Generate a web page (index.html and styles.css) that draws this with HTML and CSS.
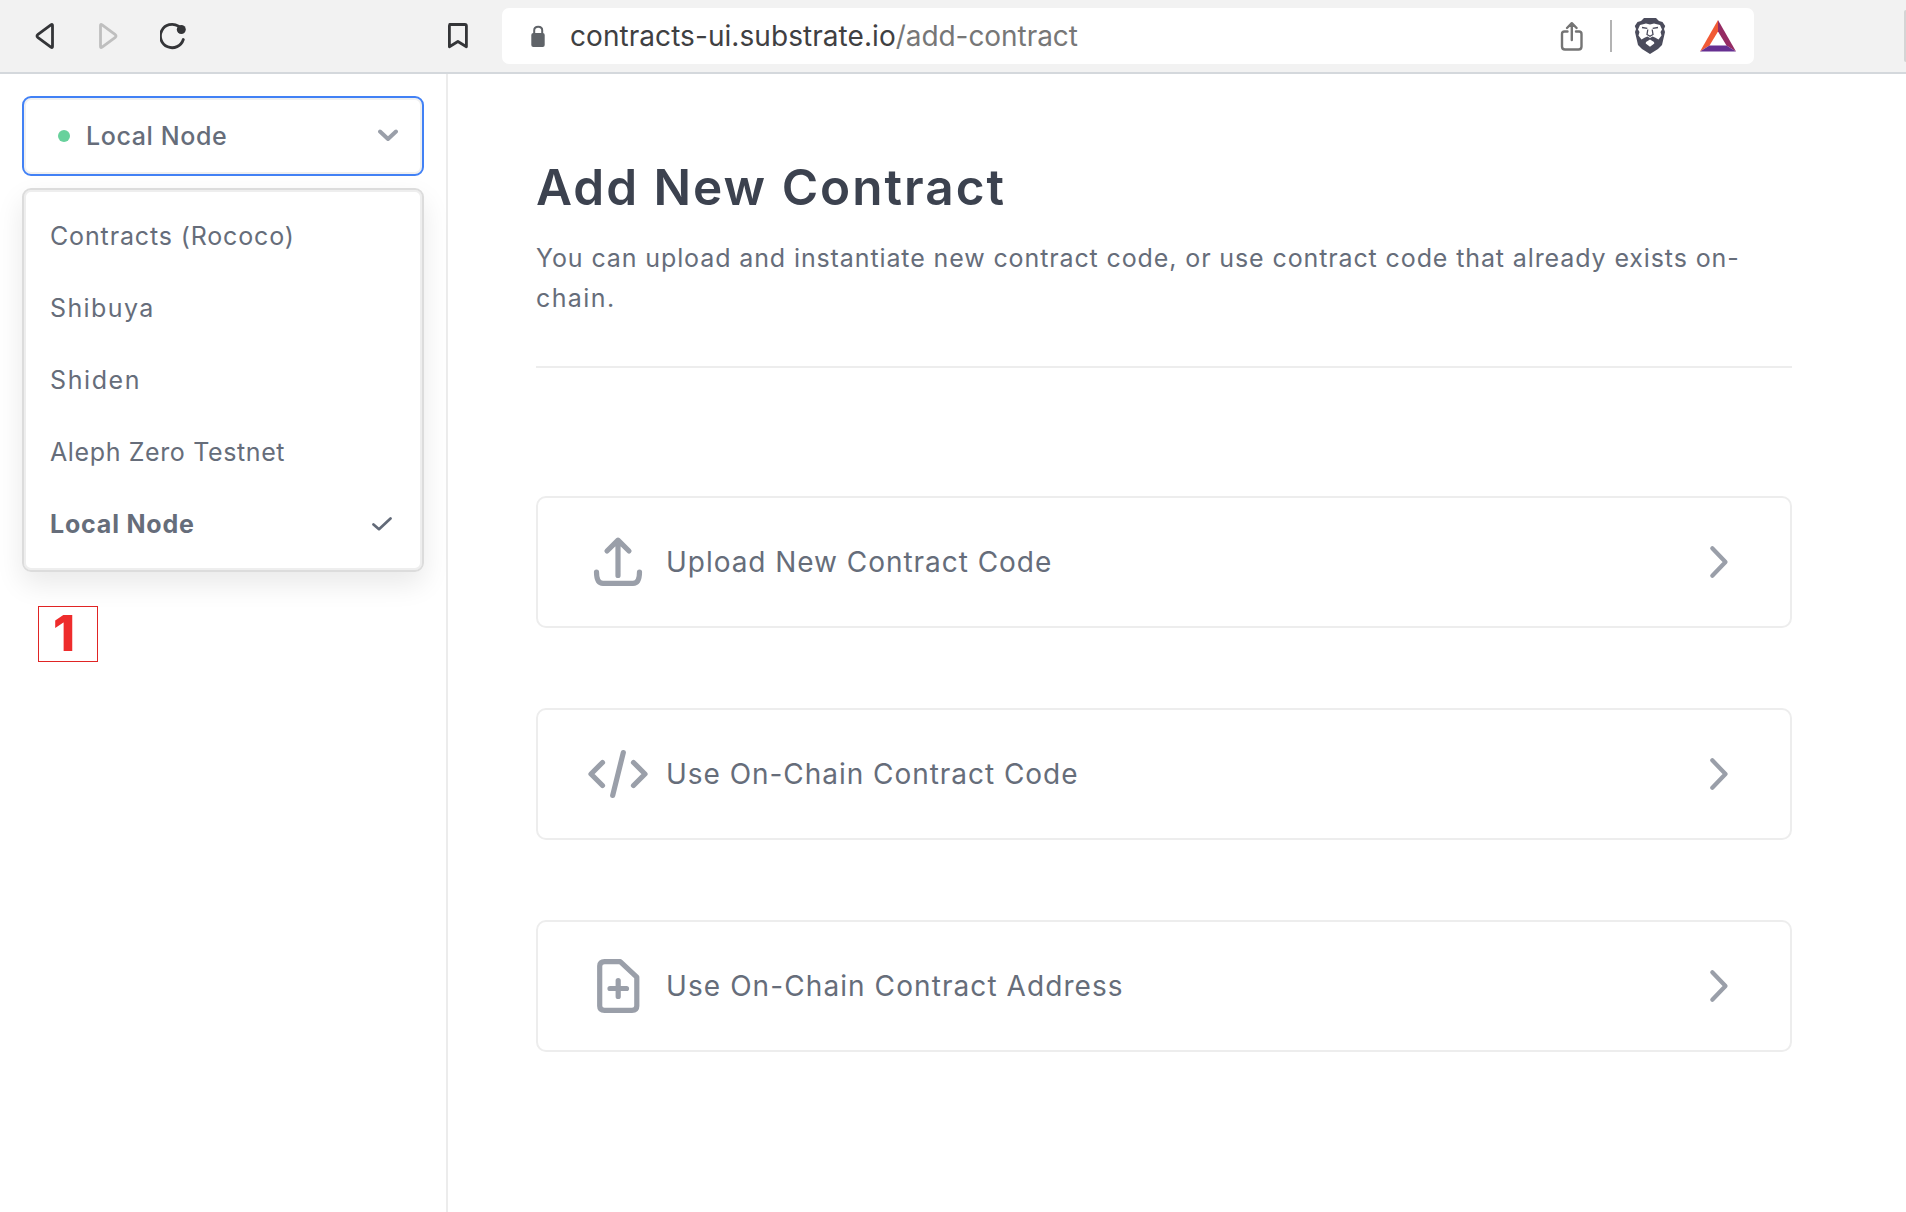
FILE: index.html
```html
<!DOCTYPE html>
<html lang="en">
<head>
<meta charset="utf-8">
<title>Contracts UI</title>
<link rel="stylesheet" href="styles.css">
</head>
<body>
<header class="toolbar">
  <nav class="nav-buttons">
    <svg class="nav-icon" width="34" height="36" viewBox="0 0 34 36"><path d="M18.500 7.500V28.500Q18.500 30.300 16.900 29.200L3.700 19.300Q2.300 18 3.700 16.700L16.900 6.800Q18.500 5.700 18.500 7.500Z"/></svg>
    <svg class="nav-icon nav-icon-off" width="34" height="36" viewBox="0 0 34 36"><path d="M3.500 7.500V28.500Q3.500 30.300 5.100 29.200L18.300 19.300Q19.700 18 18.300 16.700L5.100 6.800Q3.500 5.700 3.500 7.500Z"/></svg>
    <svg class="nav-icon" width="34" height="36" viewBox="0 0 34 36"><path d="M18.500 8.200A11.700 11.700 0 1 0 23.300 21.500"/><circle class="nav-dot" cx="21.300" cy="11.500" r="4.500"/></svg>
  </nav>
  <svg class="nav-icon bookmark" width="24" height="36" viewBox="0 0 24 36"><path d="M4.800 6.500H19.900Q21.400 6.500 21.400 8V28.800L12.900 23.500L4.400 28.800V8Q4.400 6.500 5.900 6.500Z"/></svg>
  <div class="address">
    <svg width="16" height="24" viewBox="0 0 16 24"><path d="M4.200 10V6.300Q4.200 2.800 8.200 2.800Q12.200 2.800 12.200 6.300V10" fill="none" stroke="#5f6368" stroke-width="2"/><rect x="1.300" y="9" width="13.400" height="14" rx="2" fill="#5f6368"/></svg>
    <div class="url"><span class="url-host">contracts-ui.substrate.io</span><span class="url-path">/add-contract</span></div>
    <svg class="share" width="24" height="32" viewBox="0 0 24 32"><path d="M7.500 11.500H4.500Q2 11.500 2 14V26.500Q2 29.500 5 29.500H18.500Q21.500 29.500 21.500 26.500V14Q21.500 11.500 19 11.500H16M11.800 20V3.500M7 8L11.800 3.200L16.600 8"/></svg>
    <span class="separator"></span>
    <svg class="lion" width="32" height="36" viewBox="0 0 32 36">
      <path fill="#4b4c5c" d="M10 0H22L25 3L28.500 4L31.200 8L30 11L31 14L28 27L24 31L16 36L8 31L4 27L1 14L2 11L.800 8L3.500 4L7 3Z"/>
      <path fill="#fff" d="M6 7L12 5.500L16 6.500L20 5.500L26 7L28 11.500L26.500 14L27.500 17.500L24.500 21.500L21 19.500L18.500 18.500L16 20L13.500 18.500L11 19.500L7.500 21.500L4.500 17.500L5.500 14L4 11.500ZM12 24L16 21.500L20 24L20.300 25.500L16 28.800L11.700 25.500Z"/>
      <path fill="none" stroke="#4b4c5c" stroke-width="1.300" d="M8 9.500L13.300 10.300M24 9.500L18.700 10.300M13.800 11.500L13 16.500L16 18.300L19 16.500L18.200 11.500"/>
    </svg>
    <svg class="bat" width="36" height="32" viewBox="0 0 36 32"><path fill="#f15a35" d="M18 0V11.500L9.500 25.500L0 31.500Z"/><path fill="#952b63" d="M18 0L36 31.500L26.500 25.500L18 11.500Z"/><path fill="#662f91" d="M0 31.500L9.500 25.500H26.500L36 31.500Z"/></svg>
  </div>
  <span class="edge"></span>
</header>
<div class="page">
  <aside class="sidebar">
    <div class="select">
      <span class="status"></span>
      <span class="select-label">Local Node</span>
      <svg width="20" height="14" viewBox="0 0 20 14"><path d="M2 2.500L10 10L18 2.500" fill="none" stroke="#9a9fa9" stroke-width="4" stroke-linecap="round" stroke-linejoin="round"/></svg>
    </div>
    <ul class="options">
      <li class="option option-rococo">Contracts (Rococo)</li>
      <li class="option option-shibuya">Shibuya</li>
      <li class="option option-shiden">Shiden</li>
      <li class="option option-aleph">Aleph Zero Testnet</li>
      <li class="option option-selected">Local Node
        <svg width="20" height="14" viewBox="0 0 20 14"><path d="M1.500 7.500L7 12.200L18.500 1.500" fill="none" stroke="#626a78" stroke-width="2.700" stroke-linecap="round" stroke-linejoin="round"/></svg>
      </li>
    </ul>
    <div class="marker">1</div>
  </aside>
  <main class="main">
    <h1 class="title">Add New Contract</h1>
    <p class="intro">You can upload and instantiate new contract code, or use contract code that already exists on-<span class="intro-end">chain.</span></p>
    <div class="cards">
      <a class="card">
        <svg class="card-icon" width="64" height="60" viewBox="0 0 64 60"><path d="M32 43.500V9M21 19L32 8.200L43 19M10.500 40Q10.500 51.300 17 51.300H47Q53.500 51.300 53.500 40"/></svg>
        <span class="card-label label-upload">Upload New Contract Code</span>
        <svg class="chevron" width="20" height="34" viewBox="0 0 20 34"><path d="M3.300 3.300L16.500 17L3.300 30.700"/></svg>
      </a>
      <a class="card">
        <svg class="card-icon" width="64" height="60" viewBox="0 0 64 60"><path d="M16.500 18.500L5 30L16.500 41.500M47.500 18.500L59 30L47.500 41.500M37.300 8.600L26.700 51.400"/></svg>
        <span class="card-label label-code">Use On-Chain Contract Code</span>
        <svg class="chevron" width="20" height="34" viewBox="0 0 20 34"><path d="M3.300 3.300L16.500 17L3.300 30.700"/></svg>
      </a>
      <a class="card">
        <svg class="card-icon" width="64" height="60" viewBox="0 0 64 60"><path d="M18.500 5.700H34.200L50.800 21.200V50Q50.800 54.300 46 54.300H18.500Q13.700 54.300 13.700 50V10Q13.700 5.700 18.500 5.700ZM24 32.500H40.500M32.200 24.500V40.500"/></svg>
        <span class="card-label label-address">Use On-Chain Contract Address</span>
        <svg class="chevron" width="20" height="34" viewBox="0 0 20 34"><path d="M3.300 3.300L16.500 17L3.300 30.700"/></svg>
      </a>
    </div>
  </main>
</div>
</body>
</html>
```

FILE: styles.css
```css
* { box-sizing: border-box; }
body {
  margin: 0;
  height: 1212px;
  display: flex;
  flex-direction: column;
  overflow: hidden;
  background: #fff;
  color: #666d7a;
  font-family: Inter, "Liberation Sans", sans-serif;
}
svg { flex: none; display: block; }

/* Browser toolbar */
.toolbar {
  flex: none;
  display: flex;
  align-items: center;
  height: 74px;
  padding-left: 34px;
  background: #f2f2f2;
  border-bottom: 2px solid #d4d8dc;
}
.nav-buttons { display: flex; width: 411px; gap: 29px; }
.nav-icon { fill: none; stroke: #343538; stroke-width: 2.8; stroke-linejoin: round; stroke-linecap: round; }
.nav-icon-off { stroke: #bfbfbf; }
.nav-dot { fill: #343538; stroke: none; }
.address {
  flex: none;
  display: flex;
  align-items: center;
  width: 1252px;
  height: 56px;
  margin-left: 33px;
  padding-left: 28px;
  border-radius: 7px;
  background: #fff;
}
.url { width: 990px; margin-left: 24px; font-size: 28px; line-height: 34px; white-space: nowrap; }
.url-host { color: #3f4042; letter-spacing: 0.06px; }
.url-path { color: #777; letter-spacing: -0.06px; }
.share { fill: none; stroke: #747474; stroke-width: 2.4; stroke-linecap: round; stroke-linejoin: round; }
.separator { width: 2px; height: 32px; margin-left: 26px; background: #b3b3b3; }
.lion { margin-left: 22px; }
.bat { margin-left: 34px; }
.edge { width: 2px; height: 52px; margin-left: auto; background: #d5d5d5; border-radius: 2px 0 0 2px; }

/* Layout */
.page { flex: 1; display: flex; }
.sidebar { width: 448px; padding: 22px 22px 0; border-right: 2px solid #ececec; }
.main { width: 1256px; margin-left: 88px; padding-top: 83px; }

/* Node picker */
.select {
  display: flex;
  align-items: center;
  width: 402px;
  height: 80px;
  padding: 0 24px 0 34px;
  border: 2px solid #4281f5;
  border-radius: 9px;
  box-shadow: inset 0 0 0 2px #f0f0f0;
}
.status { width: 12px; height: 12px; border-radius: 50%; background: #68d19c; }
.select-label { flex: 1; margin-left: 16px; font-size: 25px; line-height: 40px; font-weight: 500; letter-spacing: 0.600px; }
.options {
  width: 402px;
  height: 384px;
  margin: 12px 0 0;
  padding: 10px 30px 10px 26px;
  list-style: none;
  border: 2px solid #dcdcdc;
  border-radius: 9px;
  box-shadow: inset 0 0 0 2px #eee, 0 12px 28px rgba(0, 0, 0, 0.09);
}
.option { display: flex; align-items: center; justify-content: space-between; height: 72px; font-size: 25px; white-space: nowrap; }
.option-rococo { letter-spacing: 0.860px; }
.option-shibuya { letter-spacing: 1.400px; }
.option-shiden { letter-spacing: 1.600px; }
.option-aleph { letter-spacing: 0.620px; }
.option-selected { font-weight: 700; letter-spacing: 0.800px; }
.marker {
  width: 60px;
  height: 56px;
  margin: 34px 0 0 16px;
  padding-left: 14px;
  border: 1px solid #e02424;
  color: #ee2c2c;
  font-size: 50px;
  line-height: 53px;
  font-weight: 800;
}

/* Content */
.title { margin: 0; color: #3c424f; font-size: 49.500px; line-height: 60px; font-weight: 600; letter-spacing: 2px; }
.intro { margin: 21px 0 0; padding-bottom: 48px; border-bottom: 2px solid #ededed; font-size: 25px; line-height: 40px; letter-spacing: 0.885px; }
.intro-end { letter-spacing: 1.400px; }
.cards { display: flex; flex-direction: column; gap: 80px; margin-top: 128px; }
.card { display: flex; align-items: center; height: 132px; padding: 0 61px 0 48px; border: 2px solid #ededed; border-radius: 10px; }
.card-icon { fill: none; stroke: #9a9fa9; stroke-width: 5.200; stroke-linecap: round; stroke-linejoin: round; }
.card-label { flex: 1; margin-left: 16px; font-size: 28px; line-height: 40px; }
.label-upload { letter-spacing: 0.960px; }
.label-code { letter-spacing: 0.960px; }
.label-address { letter-spacing: 1.080px; }
.chevron { fill: none; stroke: #9a9fa9; stroke-width: 4.200; stroke-linecap: round; stroke-linejoin: round; }
```
